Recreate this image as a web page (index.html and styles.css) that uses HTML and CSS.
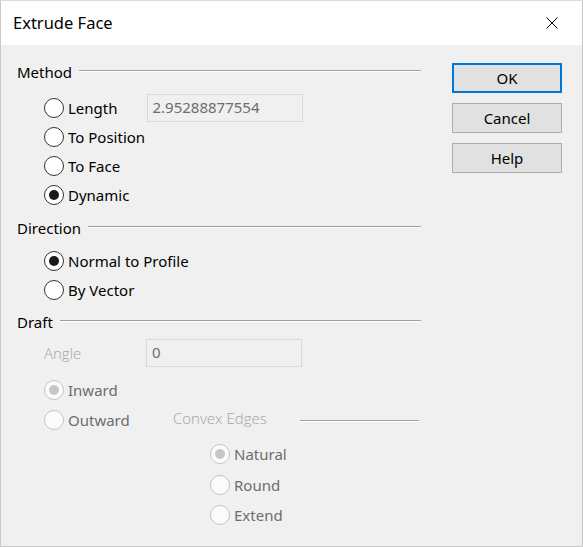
FILE: index.html
```html
<!DOCTYPE html>
<html>
<head>
<meta charset="utf-8">
<link rel="stylesheet" href="styles.css">
</head>
<body>
<div class="window">
  <div class="titlebar">
    <span class="title">Extrude Face</span>
    <svg class="close" width="12" height="12" viewBox="0 0 12 12"><path d="M0.5 0.5 L11.5 11.5 M11.5 0.5 L0.5 11.5" stroke="#000" stroke-width="1" fill="none"/></svg>
  </div>
  <div class="content">
    <div class="main">
      <div class="group-head g-method"><span class="gl">Method</span><span class="line"></span></div>
      <div class="row r-length"><span class="radio"></span><span class="lbl">Length</span><span class="input len-input">2.95288877554</span></div>
      <div class="row"><span class="radio"></span><span class="lbl">To Position</span></div>
      <div class="row"><span class="radio"></span><span class="lbl">To Face</span></div>
      <div class="row"><span class="radio checked"></span><span class="lbl">Dynamic</span></div>

      <div class="group-head g-direction"><span class="gl">Direction</span><span class="line"></span></div>
      <div class="row r-first"><span class="radio checked"></span><span class="lbl">Normal to Profile</span></div>
      <div class="row"><span class="radio"></span><span class="lbl">By Vector</span></div>

      <div class="group-head g-draft"><span class="gl">Draft</span><span class="line"></span></div>
      <div class="row r-angle"><span class="light angle-lbl">Angle</span><span class="input angle-input">0</span></div>
      <div class="row drow r-inward"><span class="radio dis checked"></span><span class="lbl dlbl">Inward</span></div>
      <div class="row drow"><span class="radio dis"></span><span class="lbl dlbl out-lbl">Outward</span>
        <div class="sub-head"><span class="light">Convex Edges</span><span class="line sub-line"></span></div>
      </div>
      <div class="convex">
        <div class="row crow"><span class="radio dis checked"></span><span class="lbl dlbl">Natural</span></div>
        <div class="row crow"><span class="radio dis"></span><span class="lbl dlbl">Round</span></div>
        <div class="row crow"><span class="radio dis"></span><span class="lbl dlbl">Extend</span></div>
      </div>
    </div>
    <div class="buttons">
      <div class="btn default">OK</div>
      <div class="btn">Cancel</div>
      <div class="btn">Help</div>
    </div>
  </div>
</div>
</body>
</html>
```

FILE: styles.css
```css
* { box-sizing: border-box; }
html, body { margin: 0; padding: 0; }
body {
  width: 583px;
  height: 547px;
  font-family: "Noto Sans", "Open Sans", sans-serif;
  font-size: 15px;
  color: #000;
  background: #fff;
}
.window {
  width: 583px;
  height: 547px;
  border: 1px solid #c8c8c8;
  border-top-color: #dcdcdc;
  background: #f0f0f0;
  display: flex;
  flex-direction: column;
}
.titlebar {
  height: 44px;
  background: #fff;
  display: flex;
  align-items: center;
  padding-left: 12px;
  padding-right: 24px;
  flex: none;
}
.title {
  font-size: 16.5px;
  flex: 1;
  position: relative;
  top: -1px;
}
.close { display: block; }
.content {
  flex: 1;
  display: flex;
  padding-left: 16px;
}
.main {
  width: 404px;
  display: flex;
  flex-direction: column;
}
.group-head {
  height: 20px;
  display: flex;
  align-items: center;
}
.gl { line-height: 20px; }
.line {
  flex: 1;
  height: 2px;
  border-top: 1px solid #a0a0a0;
  border-bottom: 1px solid #fff;
  margin-left: 7px;
  position: relative;
  top: -1px;
}
.g-method { margin-top: 17px; }
.g-direction { margin-top: 9px; }
.g-draft { margin-top: 8px; }
.row {
  height: 29px;
  display: flex;
  align-items: center;
  padding-left: 27px;
}
.r-length { margin-top: 11px; }
.r-first { margin-top: 8px; }
.radio {
  width: 20px;
  height: 20px;
  border-radius: 50%;
  border: 1px solid #333;
  background: #fff;
  flex: none;
  display: flex;
  align-items: center;
  justify-content: center;
}
.radio.checked::after {
  content: "";
  width: 10px;
  height: 10px;
  border-radius: 50%;
  background: #1a1a1a;
}
.radio.dis {
  border-color: #c4c4c4;
  background: #fbfbfb;
}
.radio.dis.checked::after { background: #c6c6c6; }
.lbl {
  margin-left: 4px;
  line-height: 20px;
}
.dlbl { color: #6d6d6d; }
.input {
  height: 28px;
  border: 1px solid #d9d9d9;
  background: #f0f0f0;
  color: #6d6d6d;
  width: 156px;
  padding-left: 5px;
  line-height: 25px;
  flex: none;
}
.len-input { margin-left: 29px; }
.light {
  font-family: "Open Sans", "Noto Sans", sans-serif;
  font-weight: 300;
  color: #a3a3a3;
  font-size: 15px;
}
.r-angle { height: 28px; margin-top: 7px; }
.angle-lbl { width: 102px; }
.r-inward { margin-top: 8px; }
.drow { height: 30px; }
.out-lbl { width: 105px; }
.sub-head {
  flex: 1;
  display: flex;
  align-items: center;
  position: relative;
  top: -2px;
}
.sub-line { margin-left: 33px; margin-right: 2px; top: 3px; }
.convex { padding-left: 193px; margin-top: 4px; }
.crow { height: 30.5px; padding-left: 0; }
.buttons {
  display: flex;
  flex-direction: column;
  gap: 10px;
  padding-top: 18px;
  margin-left: 31px;
}
.btn {
  width: 110px;
  height: 30px;
  border: 1px solid #adadad;
  background: #e1e1e1;
  display: flex;
  align-items: center;
  justify-content: center;
  line-height: 20px;
}
.btn.default {
  border: 2px solid #0078d7;
}
```
